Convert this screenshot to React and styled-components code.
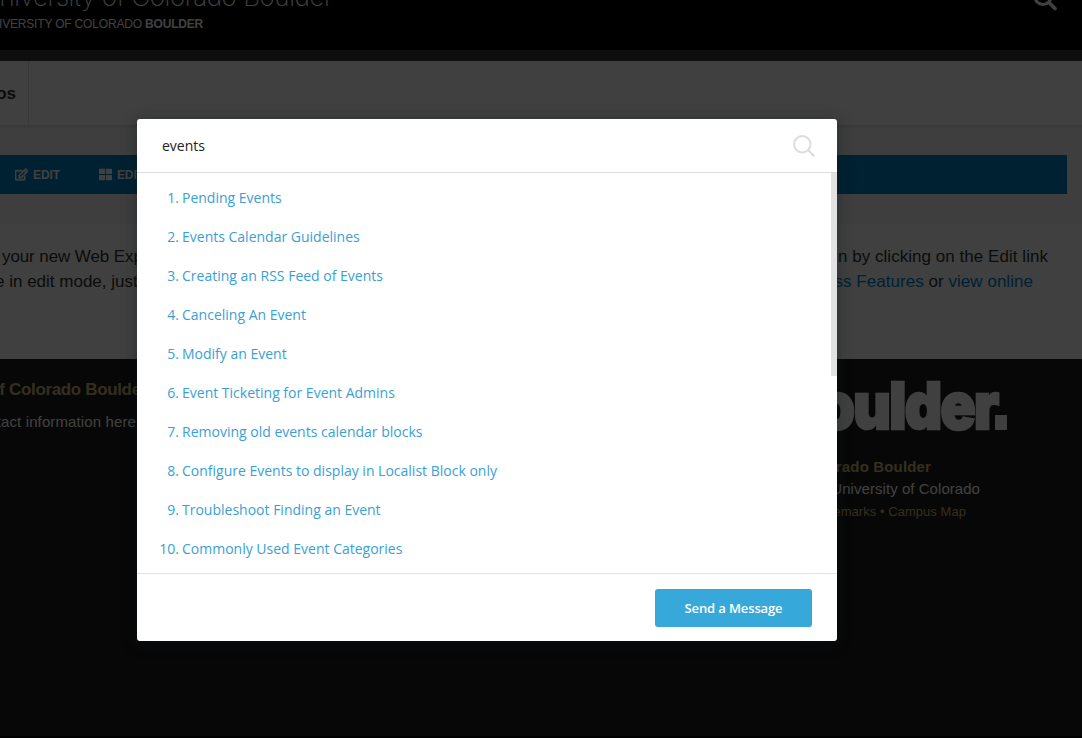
import React from 'react';
import styled, { createGlobalStyle } from 'styled-components';
import { FaRegEdit, FaThLarge } from 'react-icons/fa';

const Global = createGlobalStyle`
  * { box-sizing: border-box; }
  body { margin: 0; background: #000; overflow: hidden; }
  a { color: #0084c8; text-decoration: none; }
`;

const Page = styled.div`
  width: 1082px;
  height: 738px;
  overflow: hidden;
  display: flex;
  flex-direction: column;
  background: #fff;
  color: #333;
  font-family: "Liberation Sans", Arial, sans-serif;
  white-space: nowrap;
`;

const Header = styled.header`
  height: 50px;
  flex: none;
  background: #000;
  color: #fff;
  display: flex;
  justify-content: space-between;
`;

const Brand = styled.div`
  margin-top: -19px;
  margin-left: -19px;
`;

const SiteName = styled.div`
  font: 200 26px/32px Inter, sans-serif;
  letter-spacing: -0.45px;
`;

const Campus = styled.div`
  margin-top: 3px;
  margin-left: 1px;
  font-size: 12px;
  line-height: 16px;
  letter-spacing: -0.18px;
`;

const HeaderSearch = styled.svg`
  width: 26px;
  height: 26px;
  margin: -14px 24px 0 0;
`;

const Strip = styled.div`
  height: 11px;
  flex: none;
  background: #383838;
`;

const Nav = styled.nav`
  height: 64px;
  flex: none;
  display: flex;
  background: #fff;
`;

const NavItem = styled.div`
  width: 29px;
  border-right: 1px solid #d9d9d9;
  display: flex;
  align-items: center;
  justify-content: flex-end;
  padding: 2px 12px 0 0;
  font-size: 17px;
  font-weight: 700;
`;

const EditArea = styled.div`
  height: 99px;
  flex: none;
  padding: 30px 15px 0 0;
  background: linear-gradient(#dcdcdc, #f5f5f5 4px);
`;

const EditBar = styled.div`
  height: 39px;
  background: #0084c8;
  color: #fff;
  display: flex;
  align-items: center;
  gap: 39px;
  padding-left: 15px;
  font-size: 12px;
  font-weight: 700;
  letter-spacing: -0.1px;
`;

const EditItem = styled.span`
  display: flex;
  align-items: center;
  gap: 5px;
`;

const PencilIcon = styled(FaRegEdit)`
  stroke: currentColor;
  stroke-width: 28px;
`;

const Body = styled.main`
  height: 135px;
  flex: none;
  padding: 20px 0 0;
  font-size: 17px;
  line-height: 25px;
`;

const Line = styled.div`
  display: flex;
  justify-content: space-between;
  padding-right: ${(p) => p.$end}px;
  margin-left: ${(p) => p.$start}px;
`;

const Lead = styled.span`
  letter-spacing: ${(p) => p.$track}px;
`;

const Footer = styled.footer`
  height: 377px;
  flex: none;
  display: flex;
  justify-content: space-between;
  background: #1c1c1c;
  color: #fff;
`;

const BottomEdge = styled.div`
  height: 2px;
  background: #000;
`;

const Contact = styled.div`
  display: flex;
  flex-direction: column;
  align-items: flex-end;
  width: 147px;
  padding-top: 20px;
`;

const Gold = styled.div`
  color: #cfb87c;
  font-weight: 700;
  font-size: 17px;
  letter-spacing: -0.35px;
  line-height: 22px;
`;

const ContactText = styled.div`
  margin: 10px 11px 0 0;
  font-size: 15px;
  letter-spacing: 0.12px;
  line-height: 22px;
`;

const University = styled.div`
  width: 320px;
  padding-top: 8px;
`;

const Wordmark = styled.svg`
  display: block;
  width: 260px;
  height: 70px;
  overflow: visible;
`;

const FooterLines = styled.div`
  display: flex;
  flex-direction: column;
  padding-top: 19px;
`;

const FooterLine = styled.div`
  display: flex;
  justify-content: flex-end;
  width: ${(p) => p.$w}px;
  color: ${(p) => (p.$gold ? '#cfb87c' : '#fff')};
  font-weight: ${(p) => (p.$bold ? 700 : 400)};
  font-size: ${(p) => p.$size || 15}px;
  letter-spacing: ${(p) => (p.$bold ? 0.15 : 0.05)}px;
  line-height: ${(p) => (p.$size ? 24 : 22)}px;
`;

const Overlay = styled.div`
  position: absolute;
  inset: 0;
  width: 1082px;
  height: 738px;
  padding: 119px 0 0 137px;
  background: rgba(0, 0, 0, 0.75);
`;

const Modal = styled.section`
  width: 700px;
  height: 522px;
  display: flex;
  flex-direction: column;
  background: #fff;
  border-radius: 3px;
  overflow: hidden;
  box-shadow: 0 2px 15px rgba(16, 22, 30, 0.4);
  font-family: "Open Sans", sans-serif;
  font-size: 14px;
`;

const SearchRow = styled.div`
  height: 54px;
  flex: none;
  display: flex;
  align-items: center;
  justify-content: space-between;
  padding: 0 22px 0 25px;
  border-bottom: 1px solid #dadcdc;
  color: #222;
`;

const SearchIcon = styled.svg`
  width: 22px;
  height: 22px;
`;

const Results = styled.div`
  height: 400px;
  flex: none;
  display: flex;
  justify-content: space-between;
`;

const List = styled.ol`
  list-style: none;
  margin: 0;
  padding: 5px 0 0;
`;

const Result = styled.li`
  height: 39px;
  display: flex;
  align-items: center;
  gap: 3px;
  color: #3a9fd5;
`;

const Num = styled.span`
  width: 42px;
  text-align: right;
`;

const Thumb = styled.div`
  width: 6px;
  height: 203px;
  background: #e2e2e2;
`;

const Actions = styled.div`
  flex: 1;
  display: flex;
  justify-content: flex-end;
  align-items: flex-start;
  padding: 15px 25px 0 0;
  border-top: 1px solid #e2e4e4;
`;

const Send = styled.button`
  width: 157px;
  height: 38px;
  border: 0;
  padding: 0;
  border-radius: 3px;
  background: #37a8da;
  color: #fff;
  font: 600 13px "Open Sans", sans-serif;
  letter-spacing: -0.12px;
`;

const results = [
  'Pending Events',
  'Events Calendar Guidelines',
  'Creating an RSS Feed of Events',
  'Canceling An Event',
  'Modify an Event',
  'Event Ticketing for Event Admins',
  'Removing old events calendar blocks',
  'Configure Events to display in Localist Block only',
  'Troubleshoot Finding an Event',
  'Commonly Used Event Categories',
];

export default function App() {
  return (
    <>
      <Global />
      <Page>
        <Header>
          <Brand>
            <SiteName>University of Colorado Boulder</SiteName>
            <Campus>UNIVERSITY OF COLORADO <b>BOULDER</b></Campus>
          </Brand>
          <HeaderSearch viewBox="0 0 26 26" fill="none" stroke="#fff">
            <circle cx="11" cy="10.5" r="8" strokeWidth="3.2" />
            <path d="M17 16.5l6 6" strokeWidth="3.6" strokeLinecap="round" />
          </HeaderSearch>
        </Header>
        <Strip />
        <Nav><NavItem>Photos</NavItem></Nav>
        <EditArea>
          <EditBar>
            <EditItem><PencilIcon size={13} />EDIT</EditItem>
            <EditItem><FaThLarge size={13} />EDIT LAYOUT</EditItem>
          </EditBar>
        </EditArea>
        <Body>
          <Line $start={2} $end={34}>
            <Lead $track={-0.1}>your new Web Express</Lead>
            <Lead $track={0.04}>begin by clicking on the Edit link</Lead>
          </Line>
          <Line $start={-5} $end={49}>
            <Lead $track={0}>e in edit mode, just</Lead>
            <Lead $track={0.04}><a>Express Features</a> or <a>view online</a></Lead>
          </Line>
        </Body>
        <Footer>
          <Contact>
            <Gold>University of Colorado Boulder</Gold>
            <ContactText>Contact information here</ContactText>
          </Contact>
          <University>
            <Wordmark viewBox="0 0 260 70">
              <text
                transform="translate(235.5 61.5) scale(0.89 1)"
                textAnchor="end"
                fill="#fff"
                stroke="#fff"
                strokeWidth="2.6"
                fontFamily="Inter"
                fontWeight="900"
                fontSize="65"
                letterSpacing="-1.8"
              >
                Boulder
              </text>
              <rect x="233" y="48" width="12" height="15" fill="#fff" />
            </Wordmark>
            <FooterLines>
              <FooterLine $w={169} $gold $bold>University of Colorado Boulder</FooterLine>
              <FooterLine $w={218}>© Regents of the University of Colorado</FooterLine>
              <FooterLine $w={204} $gold $size={13}>Privacy • Legal &amp; Trademarks • Campus Map</FooterLine>
            </FooterLines>
          </University>
        </Footer>
        <BottomEdge />
      </Page>
      <Overlay>
        <Modal>
          <SearchRow>
            <span>events</span>
            <SearchIcon viewBox="0 0 22 22" fill="none" stroke="#dcdcdc" strokeWidth="2">
              <circle cx="9.3" cy="9.3" r="8.2" />
              <path d="M15 15l6.3 6.3" />
            </SearchIcon>
          </SearchRow>
          <Results>
            <List>
              {results.map((title, i) => (
                <Result key={title}><Num>{i + 1}.</Num><span>{title}</span></Result>
              ))}
            </List>
            <Thumb />
          </Results>
          <Actions><Send>Send a Message</Send></Actions>
        </Modal>
      </Overlay>
    </>
  );
}
